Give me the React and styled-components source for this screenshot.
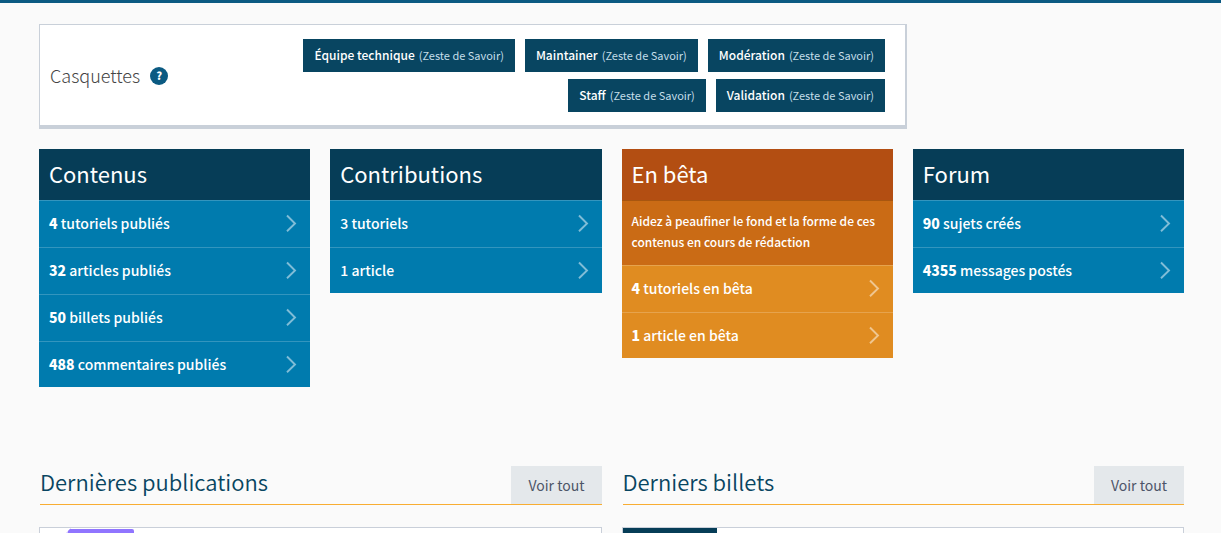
import React from 'react';
import styled, { createGlobalStyle, css } from 'styled-components';

const GlobalStyle = createGlobalStyle`
  *, *::before, *::after { box-sizing: border-box; }
  html { scrollbar-width: none; }
  body {
    margin: 0;
    background: #fafafa;
    color: #084561;
    font-family: "Source Sans Pro", "Noto Sans CJK JP", "Liberation Sans", sans-serif;
    font-size: 14px;
  }
  a { color: inherit; text-decoration: none; }
  h2, h3, p, ul { margin: 0; padding: 0; font-weight: 400; }
  ul { list-style: none; }
`;

const Page = styled.main`
  border-top: 3px solid #0b5a82;
  padding: 21px 37px 0 39px;
`;

const HatsBox = styled.section`
  display: flex;
  align-items: center;
  gap: 20px;
  margin: 0 277px 20px 0;
  padding: 14px 20px 13px 10px;
  background: #fff;
  border: solid #c9d0d9;
  border-width: 1px 2px 4px 1px;
`;

const HatsTitle = styled.h2`
  display: flex;
  align-items: center;
  flex: none;
  gap: 10px;
  padding-bottom: 2px;
  font-size: 18px;
  font-weight: 300;
  line-height: 26px;
  color: #444;
`;

const Help = styled.a`
  width: 18px;
  height: 18px;
  margin-top: 2px;
  border-radius: 50%;
  background: #0b5a82;
  color: #fff;
  font-size: 11px;
  font-weight: 900;
  line-height: 17px;
  text-align: center;
`;

const Hats = styled.ul`
  display: flex;
  flex: 1;
  flex-wrap: wrap;
  justify-content: flex-end;
  gap: 7px 10px;
`;

const Hat = styled.a`
  display: flex;
  align-items: center;
  gap: 4px;
  height: 33px;
  padding: 0 11px 2px;
  background: #084561;
  color: #fff;
  font-size: 12px;
  font-weight: 500;
  white-space: nowrap;

  small {
    font-size: 11px;
    font-weight: 400;
    color: #c5dfea;
  }
`;

const Stats = styled.div`
  display: grid;
  grid-template-columns: repeat(4, 1fr);
  align-items: start;
  gap: 20px;
`;

const tones = {
  blue: css`
    --head: #063d57;
    --body: #007bae;
    --line: #3395be;
    --chevron: #80bdd7;
  `,
  orange: css`
    --head: #b34e12;
    --body: #e08c21;
    --line: #e6a34d;
    --chevron: #efc690;
  `,
};

const StatCard = styled.section`
  ${({ $tone }) => tones[$tone]}
  background: var(--body);
  color: #fff;
`;

const StatTitle = styled.h2`
  padding: 0 10px 2px;
  background: var(--head);
  font-size: 22px;
  line-height: 49px;
`;

const StatNote = styled.p`
  padding: 9px 10px 13px;
  border-top: 1px solid #a8560f;
  background: #ca6b15;
  font-size: 12px;
  font-weight: 500;
  line-height: 21px;
`;

const StatRow = styled.li`
  border-top: 1px solid var(--line);

  a {
    display: flex;
    align-items: center;
    justify-content: space-between;
    height: 46px;
    padding: 0 13px 2px 10px;
    font-size: 14px;
    font-weight: 500;
  }

  &:last-child a { height: 45px; }

  strong { font-weight: 900; }

  svg {
    flex: none;
    stroke: var(--chevron);
  }
`;

const Feeds = styled.div`
  display: grid;
  grid-template-columns: repeat(2, 1fr);
  gap: 20px;
  margin-top: 79px;
`;

const FeedHead = styled.header`
  display: flex;
  justify-content: space-between;
  margin: 0 0 22px 1px;
  border-bottom: 1px solid #f8ad32;
`;

const FeedTitle = styled.h2`
  font-size: 22px;
  font-weight: 350;
  line-height: 30px;
`;

const SeeAll = styled.a`
  padding: 0 17px;
  background: #e4e8eb;
  color: #4d5568;
  font-size: 14px;
  line-height: 38px;
`;

const FeedCard = styled.article`
  height: 96px;
  overflow: hidden;
  background: #fff;
  border: 1px solid #c9cfd9;

  svg { display: block; }
`;

const Cover = styled.div`
  width: 94px;
  height: 94px;
  background: #063d57;
`;

const hats = ['Équipe technique', 'Maintainer', 'Modération', 'Staff', 'Validation'];

const stats = [
  {
    title: 'Contenus',
    tone: 'blue',
    rows: [['4', 'tutoriels publiés'], ['32', 'articles publiés'], ['50', 'billets publiés'], ['488', 'commentaires publiés']],
  },
  { title: 'Contributions', tone: 'blue', rows: [['', '3 tutoriels'], ['', '1 article']] },
  {
    title: 'En bêta',
    tone: 'orange',
    note: 'Aidez à peaufiner le fond et la forme de ces contenus en cours de rédaction',
    rows: [['4', 'tutoriels en bêta'], ['1', 'article en bêta']],
  },
  { title: 'Forum', tone: 'blue', rows: [['90', 'sujets créés'], ['4355', 'messages postés']] },
];

function Chevron() {
  return (
    <svg width="12" height="18" viewBox="0 0 12 18" fill="none" strokeWidth="1.9" aria-hidden="true">
      <path d="M2 1.5 10 9.5 2 17.2" />
    </svg>
  );
}

function Feed({ title, children }) {
  return (
    <section>
      <FeedHead>
        <FeedTitle>{title}</FeedTitle>
        <SeeAll href="#">Voir tout</SeeAll>
      </FeedHead>
      <FeedCard>{children}</FeedCard>
    </section>
  );
}

export default function App() {
  return (
    <>
      <GlobalStyle />
      <Page>
        <HatsBox>
          <HatsTitle>
            Casquettes
            <Help href="#">?</Help>
          </HatsTitle>
          <Hats>
            {hats.map((name) => (
              <li key={name}>
                <Hat href="#">
                  {name} <small>(Zeste de Savoir)</small>
                </Hat>
              </li>
            ))}
          </Hats>
        </HatsBox>

        <Stats>
          {stats.map(({ title, tone, note, rows }) => (
            <StatCard key={title} $tone={tone}>
              <StatTitle>{title}</StatTitle>
              {note && <StatNote>{note}</StatNote>}
              <ul>
                {rows.map(([count, label]) => (
                  <StatRow key={label}>
                    <a href="#">
                      <span>
                        {count && <strong>{count} </strong>}
                        {label}
                      </span>
                      <Chevron />
                    </a>
                  </StatRow>
                ))}
              </ul>
            </StatCard>
          ))}
        </Stats>

        <Feeds>
          <Feed title="Dernières publications">
            <svg width="94" height="94" viewBox="0 0 94 94" aria-hidden="true">
              <path d="M26 5 31 0V94H26z" fill="#cfc4ff" />
              <path d="M30 1H92Q94 1 94 3V94H28V3z" fill="#9075ff" />
            </svg>
          </Feed>
          <Feed title="Derniers billets">
            <Cover />
          </Feed>
        </Feeds>
      </Page>
    </>
  );
}
